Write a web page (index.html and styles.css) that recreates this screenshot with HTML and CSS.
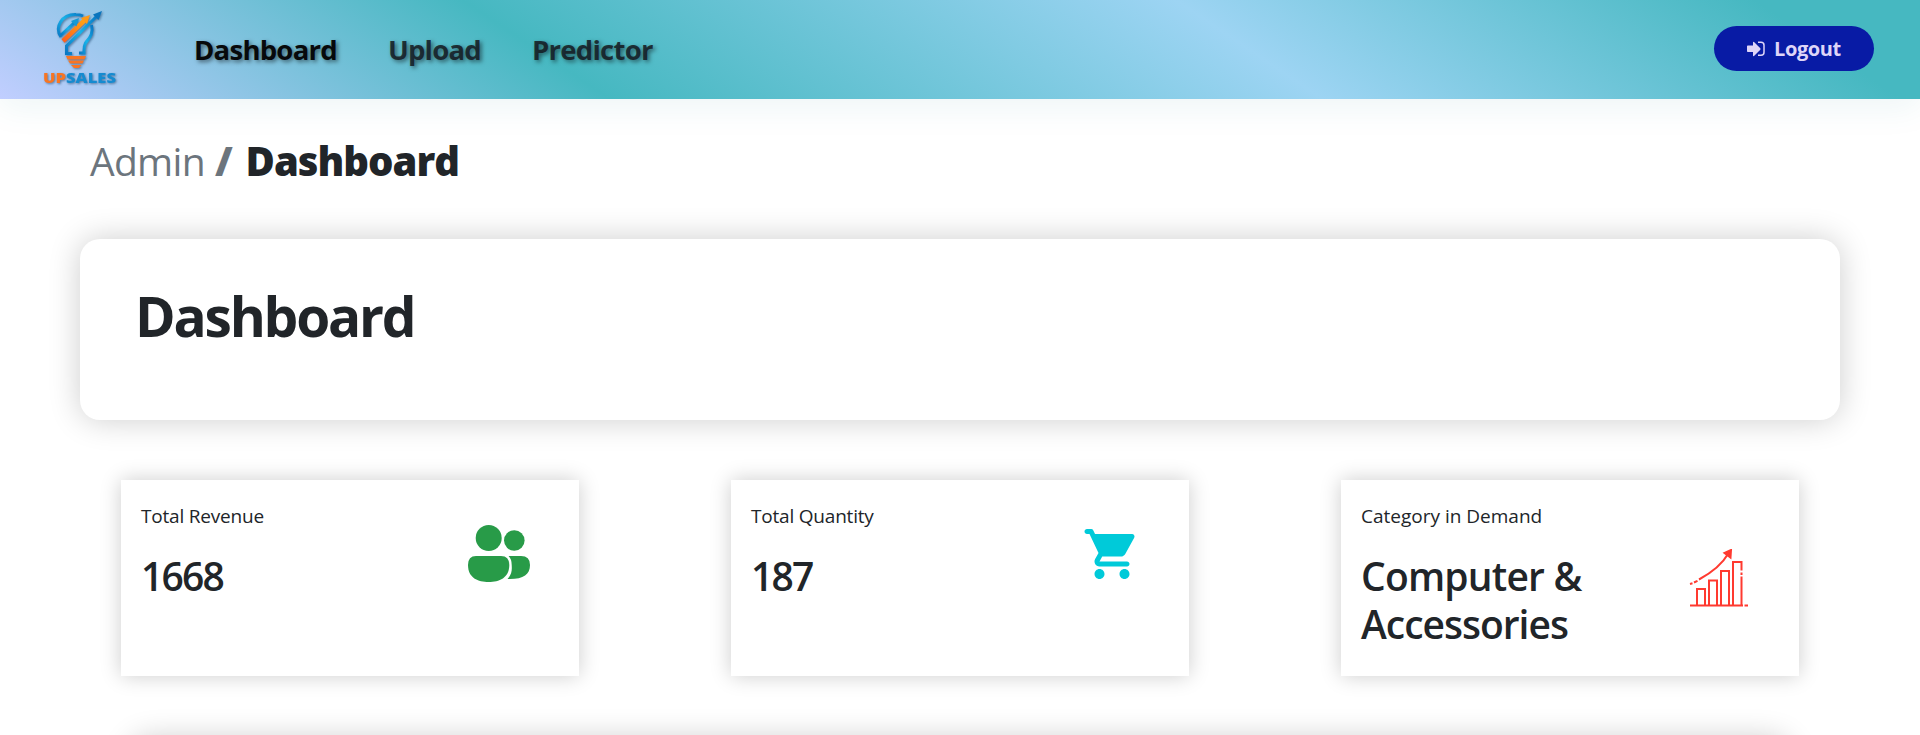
FILE: index.html
```html
<!DOCTYPE html>
<html lang="en">
<head>
<meta charset="utf-8">
<title>UpSales Dashboard</title>
<link rel="stylesheet" href="styles.css">
</head>
<body>
<header class="navbar">
  <a class="brand" href="#">
    <svg class="logo" width="80" height="78" viewBox="40 8 80 78">
      <defs>
        <linearGradient id="blue" x1="0" y1="1" x2="1" y2="0"><stop offset="0" stop-color="#0a78c4"/><stop offset=".5" stop-color="#18b4ea"/><stop offset="1" stop-color="#0a78c4"/></linearGradient>
        <linearGradient id="orange" x1="0" y1="1" x2="1" y2="0"><stop offset="0" stop-color="#ff5f1c"/><stop offset="1" stop-color="#ffa514"/></linearGradient>
      </defs>
      <g fill="none" stroke="url(#blue)" stroke-width="3">
        <path d="M61 37C54 27 62 14 76 14.500Q80 14.500 83 16"/>
        <path d="M91.500 25C94 35 88 39 85.500 43C83.500 47 84 49 84 53H79"/>
        <path d="M72 53.500H66.500V46L97 16"/>
        <path d="M61 35L75 22"/>
      </g>
      <path d="M63 41L85 20" fill="none" stroke="url(#orange)" stroke-width="4.600"/>
      <path d="M102 11L93 14.500L98.500 20Z" fill="#0a74bd"/>
      <path d="M90 15L81 18L87 24Z" fill="#ff9a16"/>
      <path d="M79 18L71 21L76.500 26.500Z" fill="#159ad6"/>
      <path d="M66 56H86L84.500 59.500H67.500ZM68 60.500H84L82.500 63.500H70ZM71 65H81.500L79 68H74Z" fill="#f97522"/>
      <text class="logo-text" x="43" y="82.500" textLength="73" lengthAdjust="spacingAndGlyphs"><tspan fill="#f97522">UP</tspan><tspan fill="#158bd0">SALES</tspan></text>
    </svg>
  </a>
  <nav class="links">
    <a class="link active" href="#">Dashboard</a>
    <a class="link" href="#">Upload</a>
    <a class="link" href="#">Predictor</a>
  </nav>
  <button class="logout">
    <svg width="18" height="16" viewBox="0 0 18 16"><path d="M.8 4.500H6V1.500Q6 .5 7 1L13.300 7.300Q13.800 8 13.300 8.700L7 15Q6 15.500 6 14.500V11H.8Q0 11 0 10.200V5.300Q0 4.500.8 4.500Z" fill="#ded5f8"/><path d="M11 1.200H14Q17 1.200 17 4.200V11.300Q17 14.300 14 14.300H11" fill="none" stroke="#ded5f8" stroke-width="1.500"/></svg>
    <span>Logout</span>
  </button>
</header>
<main class="page">
  <div class="crumbs"><span class="crumb-root">Admin</span><span class="crumb-sep">/</span><span class="crumb-here">Dashboard</span></div>
  <section class="panel"><h1 class="title">Dashboard</h1></section>
  <section class="cards">
    <article class="card">
      <div><p class="label">Total Revenue</p><p class="value number">1668</p></div>
      <svg class="icon" width="64" height="60" viewBox="466 523 64 60" fill="#289b48"><circle cx="488.700" cy="538" r="13"/><circle cx="514.300" cy="540.500" r="10.300"/><path d="M476 556H501Q509.300 556 509.300 565C509.300 578 499 582 488.700 582C478 582 468 578 468 565Q468 556 476 556Z"/><path d="M508.500 556H521Q530 556 530 565C530 575 523 579.500 507.500 579C512 574 512 570 511.700 565Q511.700 559 508.500 556Z"/></svg>
    </article>
    <article class="card">
      <div><p class="label">Total Quantity</p><p class="value number">187</p></div>
      <svg class="icon cart" width="60" height="60" viewBox="0 0 24 24" fill="#00cad9"><path d="M7 18c-1.100 0-1.990.9-1.990 2S5.900 22 7 22s2-.9 2-2-.9-2-2-2zM17 18c-1.100 0-1.990.9-1.990 2s.89 2 1.990 2 2-.9 2-2-.9-2-2-2zM8.100 13h7.450c.75 0 1.410-.41 1.750-1.030l3.580-6.490A1 1 0 0 0 20.010 4H5.210l-.67-1.430A1 1 0 0 0 3.640 2H2c-.55 0-1 .45-1 1s.45 1 1 1h1l3.600 7.590-1.350 2.440C4.520 15.370 5.480 17 7 17h11c.55 0 1-.45 1-1s-.45-1-1-1H7l1.100-2z"/></svg>
    </article>
    <article class="card">
      <div><p class="label category">Category in Demand</p><p class="value">Computer &amp;<br><span class="accessories">Accessories</span></p></div>
      <svg class="icon growth" width="60" height="60" viewBox="1689 548 60 60" fill="none" stroke="#ff3a30" stroke-width="2"><path d="M1690 604.500H1743M1744.500 604.500H1748M1697 604V588H1705V604M1709 604V579.500H1717V604M1721 604V570H1729V604M1733 604V561H1741.500V569.500M1741.500 571.500V574M1741.500 575.500V604M1690 583L1692.500 582.300M1694 581.500L1697.500 579.800M1699 578.500Q1720 567 1728 553"/><path d="M1731 549L1730.500 556.500L1724.500 552Z" fill="#ff3a30"/></svg>
    </article>
  </section>
  <section class="chart-panel"></section>
</main>
</body>
</html>
```
FILE: styles.css
```css
* { box-sizing: border-box; }
body { margin: 0; height: 735px; overflow: hidden; background: #fff; color: #212529; font-family: "Segoe UI", "Open Sans", "Noto Sans", sans-serif; }
p, h1 { margin: 0; }
.navbar { height: 99px; display: flex; align-items: center; padding: 0 46px 0 40px; background: linear-gradient(34deg, #c1ceff 0%, #46b8c1 29.500%, #9dd4f3 64%, #46b8c1 92%); box-shadow: 0 8px 32px rgba(31, 130, 135, .08); }
.brand { display: flex; margin-top: -5px; }
.logo { filter: drop-shadow(1px 1px 1px rgba(40, 80, 120, .65)); }
.logo-text { font: 800 14.500px "Open Sans", sans-serif; }
.links { display: flex; gap: 51px; margin-left: 74px; }
.link { font-size: 27.500px; line-height: 40px; font-weight: 700; letter-spacing: -.75px; color: rgba(20, 25, 32, .85); text-decoration: none; text-shadow: 2px 2px 4px rgba(0, 0, 0, .5); }
.active { color: #07090b; }
.logout { margin: -2px 0 0 auto; width: 160px; height: 45px; border: 0; border-radius: 23px; background: #081ba5; color: #ded5f8; display: flex; align-items: center; justify-content: center; gap: 9px; font: 700 20px/28px "Open Sans", sans-serif; letter-spacing: -.4px; }
.page { height: 636px; overflow: hidden; padding: 35px 80px 0; }
.crumbs { display: flex; align-items: baseline; padding-left: 10px; font-size: 40px; line-height: 54px; color: #6c757d; }
.crumb-root { font-weight: 400; font-size: 39px; letter-spacing: -.7px; }
.crumb-sep { font-weight: 800; margin: 0 13px 0 10px; }
.crumb-here { font-weight: 800; letter-spacing: -1px; color: #212529; }
.panel { height: 181px; margin-top: 51px; border-radius: 20px; padding: 37px 55px; box-shadow: 0 0 32px rgba(0, 0, 0, .2); }
.title { font-size: 55px; line-height: 80px; font-weight: 700; letter-spacing: -2.200px; }
.cards { display: grid; grid-template-columns: repeat(3, 458px); justify-content: space-between; padding: 0 41px; margin-top: 60px; }
.card { height: 196px; padding: 21px 21px 21px 20px; display: flex; justify-content: space-between; box-shadow: 0 0 20px rgba(0, 0, 0, .2); }
.label { font-size: 19px; line-height: 30px; white-space: nowrap; letter-spacing: -.2px; }
.category { letter-spacing: 0; }
.value { font-size: 39px; line-height: 48px; font-weight: 600; margin-top: 21px; white-space: nowrap; letter-spacing: -.8px; }
.number { letter-spacing: -1.800px; }
.accessories { letter-spacing: -1px; }
.icon { margin: 22px 28px 0 0; flex: none; }
.cart { margin: 23px 26px 0 0; }
.growth { margin: 48px 29px 0 0; }
.chart-panel { height: 300px; margin: 62px 50px 0; border-radius: 20px; box-shadow: 0 0 30px rgba(0, 0, 0, .2); }
```
